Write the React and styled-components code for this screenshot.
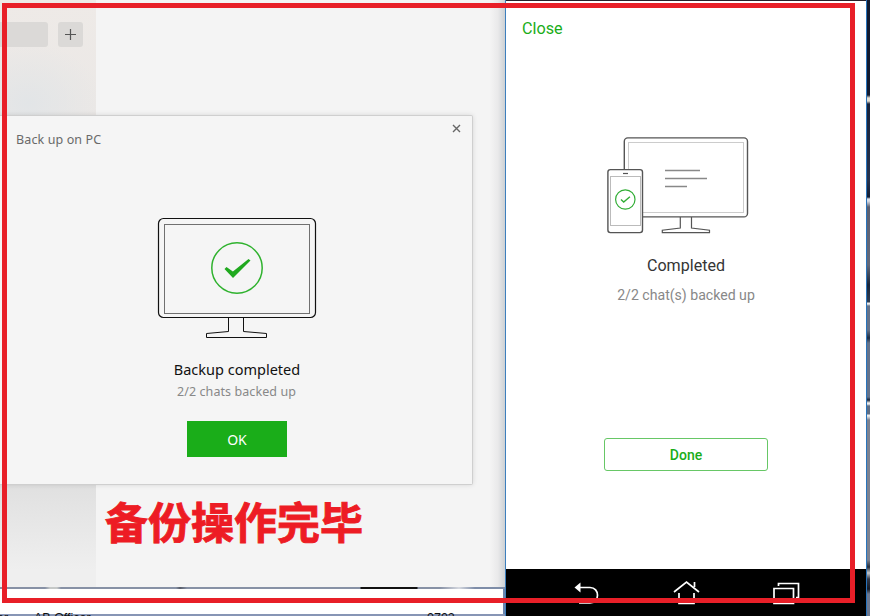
import React from 'react';
import styled, { createGlobalStyle } from 'styled-components';

const GlobalStyle = createGlobalStyle`
  * { box-sizing: border-box; }
  body { margin: 0; background: #fff; }
`;

const green = '#1aad19';

const Screen = styled.main`
  position: relative;
  display: flex;
  width: 870px;
  height: 616px;
  overflow: hidden;
  font-family: 'Noto Sans', sans-serif;
`;

const Desktop = styled.section`
  position: relative;
  display: flex;
  flex-direction: column;
  width: 505px;
  height: 616px;
  background: #6b86ad;
`;

const ChatWindow = styled.div`
  display: flex;
  height: 587px;
  background: linear-gradient(90deg, transparent 490px, #e9e9ea 498px, #cdd1d4 505px), #f4f4f4;
`;

const Sidebar = styled.aside`
  display: flex;
  align-items: flex-start;
  gap: 10px;
  width: 96px;
  padding-top: 22px;
  background:
    radial-gradient(ellipse 75px 60px at 28px 103px, #e2e5e7, transparent),
    linear-gradient(#eeeae7 0, #ebe8e6 115px, #e0e0e0 485px, #efefef 570px);
`;

const SearchField = styled.div`
  width: 48px;
  height: 25px;
  border-radius: 0 3px 3px 0;
  background: #dbd9d7;
`;

const AddButton = styled.button`
  display: grid;
  place-items: center;
  width: 25px;
  height: 25px;
  padding: 0;
  border: 0;
  border-radius: 3px;
  background: #dbd9d7;
`;

const WallpaperLine = styled.div`
  height: 2px;
  background: linear-gradient(90deg, #8791a5 0 45px, #c5c8c7 50px 57px, #8791a5 61px 176px, #555b68 180px, #8791a5 187px 360px, #111 361px 417px, #8791a5 418px 440px, #d5d8df 459px, #7e8da8 475px);
`;

const WindowGap = styled.div`
  height: 25px;
  width: 503px;
  background: #fff;
`;

const Taskbar = styled.div`
  position: relative;
  height: 2px;
  background: #8795b5;
`;

const TaskLabel = styled.span`
  position: absolute;
  left: ${(p) => p.$left}px;
  top: -3px;
  color: #111;
  font: 12.5px/14px 'Liberation Sans', sans-serif;
  white-space: nowrap;
`;

const Dialog = styled.div`
  position: absolute;
  left: 0;
  top: 115px;
  display: flex;
  flex-direction: column;
  align-items: center;
  width: 473px;
  height: 370px;
  border: 1px solid #cfcfcf;
  border-left: 0;
  border-radius: 0 2px 2px 0;
  background: #f5f5f5;
  box-shadow: 0 0 5px rgba(0, 0, 0, 0.12);
`;

const DialogHeader = styled.header`
  display: flex;
  justify-content: space-between;
  width: 100%;
  height: 101px;
  padding: 8px 11px 0 16px;
`;

const DialogTitle = styled.h1`
  margin: 6px 0 0;
  color: #696969;
  font-size: 12.5px;
  font-weight: 400;
  letter-spacing: 0.12px;
  line-height: 20px;
`;

const CloseIcon = styled.svg`
  width: 9px;
  height: 9px;
`;

const DialogArt = styled.svg`
  display: block;
  width: 160px;
  height: 122px;
  margin-left: 2px;
`;

const DialogHeading = styled.h2`
  margin: 20px 0 0 2px;
  color: #111;
  font-size: 14.5px;
  font-weight: 400;
  line-height: 20px;
  white-space: nowrap;
`;

const DialogNote = styled.p`
  margin: 3px 0 0 1px;
  color: #888;
  font-size: 12.5px;
  letter-spacing: 0.08px;
  line-height: 20px;
  white-space: nowrap;
`;

const OkButton = styled.button`
  width: 100px;
  height: 36px;
  margin: 19px 0 0 2px;
  padding: 1px 0 0;
  border: 0;
  background: ${green};
  color: #fff;
  font: 14px/35px 'Noto Sans', sans-serif;
`;

const Phone = styled.section`
  display: flex;
  flex-direction: column;
  width: 361px;
  height: 616px;
  border-left: 1px solid #3d7fbd;
  background: #fff;
  font-family: Roboto, sans-serif;
`;

const PhoneBody = styled.div`
  display: flex;
  flex-direction: column;
  align-items: center;
  height: 569px;
  border-top: 1px solid #28212b;
`;

const CloseLink = styled.button`
  align-self: flex-start;
  height: 24px;
  margin: 16px 0 0 16px;
  padding: 0;
  border: 0;
  background: none;
  color: ${green};
  font: 16.2px/24px Roboto, sans-serif;
`;

const PhoneArt = styled.svg`
  display: block;
  width: 146px;
  height: 102px;
  margin: 93px 16px 0 0;
`;

const PhoneHeading = styled.h2`
  margin: 20px 0 0;
  color: #353535;
  font-size: 16.1px;
  font-weight: 400;
  line-height: 20px;
`;

const PhoneNote = styled.p`
  margin: 9px 0 0;
  color: #888;
  font-size: 14.1px;
  line-height: 20px;
`;

const DoneButton = styled.button`
  width: 164px;
  height: 33px;
  margin-top: 133px;
  padding: 1px 0 0;
  border: 1.5px solid #67c766;
  border-radius: 3px;
  background: #fff;
  color: ${green};
  font: 500 14px/30px Roboto, sans-serif;
`;

const NavBar = styled.nav`
  height: 47px;
  background: #000;
`;

const NavIcons = styled.svg`
  display: block;
  width: 360px;
  height: 47px;
`;

const Wallpaper = styled.div`
  width: 4px;
  height: 616px;
  border-left: 1px solid #2874bc;
  background: linear-gradient(#111a30 0 95px, #e5e0d5 98px 101px, #18223a 104px, #26334e 180px, #111d35 197px, #dbe0ea 199px 201px, #5b6071 207px, #63697a 265px, #18253a 285px, #303e52 302px, #eee 303px 304px, #65738a 306px 330px, #1b2c44 338px, #64738b 343px 397px, #182437 400px, #eee 403px 404px, #5f6e84 406px 414px, #eee 415px 416px, #7c8290 420px 560px, #232b39 567px, #c6c9ce 573px, #33394a 579px, #151a26 589px, #6c7890 594px);
`;

const Caption = styled.div`
  position: absolute;
  left: 105px;
  top: 490px;
  color: #ed1c24;
  font: 700 43px/60px 'Noto Sans CJK SC', sans-serif;
  -webkit-text-stroke: 0.9px #ed1c24;
  white-space: nowrap;
`;

const RedFrame = styled.div`
  position: absolute;
  left: 2px;
  top: 3px;
  width: 853px;
  height: 600px;
  border: 5px solid #e81f28;
  pointer-events: none;
`;

function BackupDialog() {
  return (
    <Dialog>
      <DialogHeader>
        <DialogTitle>Back up on PC</DialogTitle>
        <CloseIcon viewBox="0 0 9 9">
          <path d="M1 1l7 7M8 1L1 8" stroke="#666" strokeWidth="1.4" />
        </CloseIcon>
      </DialogHeader>
      <DialogArt viewBox="157 217 160 122" fill="none" stroke="#111">
        <rect x="158.5" y="218.5" width="157" height="99" rx="5" strokeWidth="1.2" />
        <rect x="164.5" y="224.5" width="145" height="89" stroke="#707070" />
        <path d="M228.5 318v13.5l-22 2v4h60v-4l-23-2V318" />
        <circle cx="237" cy="268" r="25.2" stroke="#2fb22e" strokeWidth="1.5" />
        <path d="M224.5 269l2-2 6.400 4.600L248.500 259l2 1.500L233 278z" fill="#20a91f" stroke="none" />
      </DialogArt>
      <DialogHeading>Backup completed</DialogHeading>
      <DialogNote>2/2 chats backed up</DialogNote>
      <OkButton>OK</OkButton>
    </Dialog>
  );
}

function DevicesDrawing() {
  return (
    <PhoneArt viewBox="605 134 146 102" fill="none" stroke="#555">
      <rect x="624.3" y="137.9" width="123.2" height="79" rx="3.5" strokeWidth="1.4" />
      <rect x="628.5" y="142.5" width="115" height="70" stroke="#ccc" />
      <path d="M665 170.5h35M665 178.5h42M665 186.5h22" stroke="#888" strokeWidth="1.3" />
      <path d="M680.3 217v11l-18 2.2v2.4h47.2v-2.4l-18-2.2v-11" strokeWidth="1.2" />
      <rect x="607.9" y="169.6" width="34.6" height="63" rx="2.5" fill="#fff" strokeWidth="1.4" />
      <rect x="610.5" y="176.5" width="30" height="49" stroke="#bbb" />
      <path d="M623 173.5h5" strokeWidth="1.2" />
      <circle cx="625.3" cy="199.5" r="9.7" stroke="#31ad35" strokeWidth="1.2" />
      <path d="M621 199.5l2.7 2.6 6.2-5.3" stroke="#31ad35" strokeWidth="1.4" />
    </PhoneArt>
  );
}

export default function App() {
  return (
    <>
      <GlobalStyle />
      <Screen>
        <Desktop>
          <ChatWindow>
            <Sidebar>
              <SearchField />
              <AddButton aria-label="New chat">
                <svg width="13" height="13" viewBox="0 0 13 13" stroke="#555" strokeWidth="1.2">
                  <path d="M1 6.5h11M6.5 1v11" />
                </svg>
              </AddButton>
            </Sidebar>
          </ChatWindow>
          <WallpaperLine />
          <WindowGap />
          <Taskbar>
            <TaskLabel $left={-3}>er</TaskLabel>
            <TaskLabel $left={34}>AB Officer</TaskLabel>
            <TaskLabel $left={427}>0702</TaskLabel>
          </Taskbar>
          <BackupDialog />
        </Desktop>
        <Phone>
          <PhoneBody>
            <CloseLink>Close</CloseLink>
            <DevicesDrawing />
            <PhoneHeading>Completed</PhoneHeading>
            <PhoneNote>2/2 chat(s) backed up</PhoneNote>
            <DoneButton>Done</DoneButton>
          </PhoneBody>
          <NavBar>
            <NavIcons viewBox="506 569 360 47" fill="none" stroke="#fff" strokeWidth="1.7">
              <path d="M579 587.5h11c10 0 10 15.500 0 15.500h-11" />
              <path d="M574.5 587.5l6-5v10z" fill="#fff" stroke="none" />
              <path d="M674 592l12.5-10 12.5 10M694.5 587v-5M679 593v10.5h15V593" />
              <path d="M774 588.5h19.5v15H774zM778.5 586v-2.500h20v14h-2.500" />
            </NavIcons>
          </NavBar>
        </Phone>
        <Wallpaper />
        <Caption>备份操作完毕</Caption>
        <RedFrame />
      </Screen>
    </>
  );
}
